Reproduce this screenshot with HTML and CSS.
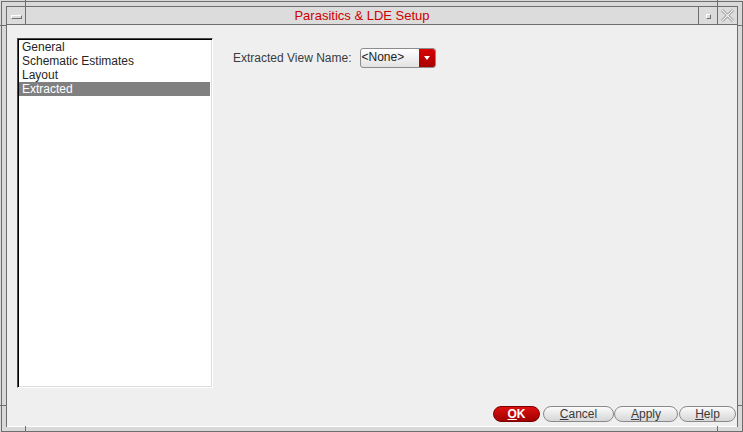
FILE: index.html
```html
<!DOCTYPE html>
<html lang="en">
<head>
  <meta charset="UTF-8" />
  <title>Parasitics &amp; LDE Setup</title>
  <link rel="stylesheet" href="styles.css">
</head>
<body>
  <div class="window">
    <span class="mark mark-v" style="left:25px;top:0"></span>
    <span class="mark mark-v" style="left:717px;top:0"></span>
    <span class="mark mark-v" style="left:25px;top:426px"></span>
    <span class="mark mark-v" style="left:717px;top:426px"></span>
    <span class="mark mark-h" style="left:0;top:25px"></span>
    <span class="mark mark-h" style="left:737px;top:25px"></span>
    <span class="mark mark-h" style="left:0;top:405px"></span>
    <span class="mark mark-h" style="left:737px;top:405px"></span>

    <div class="frame">
      <div class="inner">
        <div class="titlebar">
          <div class="tbtn tbtn-min"><span class="min-icon"></span></div>
          <div class="title">Parasitics &amp; LDE Setup</div>
          <div class="tbtn tbtn-max"><span class="max-icon"></span></div>
          <div class="tbtn tbtn-close">
            <svg width="13" height="13" viewBox="0 0 13 13">
              <path d="M1 1 L12 12 M12 1 L1 12" stroke="#8a8a8a" stroke-width="2.6" fill="none"/>
              <path d="M1 1 L12 12 M12 1 L1 12" stroke="#f4f4f4" stroke-width="1.2" fill="none"/>
            </svg>
          </div>
        </div>

        <div class="content">
          <div class="main">
            <ul class="list">
              <li>General</li>
              <li>Schematic Estimates</li>
              <li>Layout</li>
              <li class="selected">Extracted</li>
            </ul>

            <div class="panel">
              <div class="field">
                <label>Extracted View Name:</label>
                <div class="combo">
                  <span class="combo-text">&lt;None&gt;</span>
                  <span class="combo-arrow"></span>
                </div>
              </div>
            </div>
          </div>

          <div class="buttons">
            <button class="btn btn-ok"><u>O</u>K</button>
            <button class="btn btn-cancel"><u>C</u>ancel</button>
            <button class="btn btn-apply"><u>A</u>pply</button>
            <button class="btn btn-help"><u>H</u>elp</button>
          </div>
        </div>
      </div>
    </div>
  </div>
</body>
</html>
```

FILE: styles.css
```css
html, body {
  margin: 0;
  padding: 0;
  background: #d9d9d9;
  overflow: hidden;
}

body {
  font-family: "Liberation Sans", Arial, sans-serif;
  font-size: 12px;
}

.window {
  position: relative;
  width: 743px;
  height: 432px;
  box-sizing: border-box;
  padding: 1px 0 0 1px;
  background: #d9d9d9;
}

.mark {
  position: absolute;
  background: #6e6e6e;
}

.mark-v {
  width: 1px;
  height: 6px;
}

.mark-h {
  width: 6px;
  height: 1px;
}

.frame {
  height: 100%;
  box-sizing: border-box;
  border: 1px solid #6e6e6e;
  padding: 4px;
}

.inner {
  height: 100%;
  box-sizing: border-box;
  border-left: 1px solid #6e6e6e;
  border-right: 1px solid #6e6e6e;
  border-top: 1px solid #6e6e6e;
  display: flex;
  flex-direction: column;
}

/* title bar */
.titlebar {
  height: 17px;
  border-bottom: 1px solid #6e6e6e;
  background: #dcdcdc;
  display: flex;
}

.tbtn {
  display: flex;
  align-items: center;
  justify-content: center;
}

.tbtn-min {
  width: 18px;
  border-right: 1px solid #6e6e6e;
}

.min-icon {
  width: 9px;
  height: 2px;
  border-top: 1px solid #ffffff;
  border-left: 1px solid #ffffff;
  border-right: 1px solid #6e6e6e;
  border-bottom: 1px solid #6e6e6e;
  margin-top: 3px;
}

.title {
  flex: 1;
  text-align: center;
  color: #cc0000;
  font-size: 13px;
  line-height: 17px;
}

.tbtn-max {
  width: 18px;
  border-left: 1px solid #6e6e6e;
}

.max-icon {
  width: 3px;
  height: 3px;
  border-top: 1px solid #ffffff;
  border-left: 1px solid #ffffff;
  border-right: 1px solid #6e6e6e;
  border-bottom: 1px solid #6e6e6e;
  margin-top: 1px;
}

.tbtn-close {
  width: 19px;
  border-left: 1px solid #6e6e6e;
}

/* dialog body */
.content {
  flex: 1;
  background: #efefef;
  border-bottom: 1px solid #ffffff;
  display: flex;
  flex-direction: column;
}

.main {
  flex: 1;
  display: flex;
  padding: 13px 0 0 10px;
}

.list {
  width: 196px;
  height: 350px;
  box-sizing: border-box;
  margin: 0;
  padding: 1px 0 0 0;
  list-style: none;
  background: #ffffff;
  border-top: 1px solid #4a4a4a;
  border-left: 1px solid #4a4a4a;
  border-right: 1px solid #ffffff;
  border-bottom: 1px solid #ffffff;
  box-shadow: inset 1px 1px 0 #000000, inset -1px -1px 0 #dcdcdc;
}

.list li {
  height: 14px;
  line-height: 14px;
  margin: 0 2px 0 1px;
  padding-left: 3px;
  color: #262626;
}

.list li.selected {
  background: #808080;
  color: #ffffff;
}

.panel {
  margin-left: 20px;
  padding-top: 10px;
}

.field {
  display: flex;
  align-items: center;
  gap: 8px;
}

.field label {
  color: #3c3c3c;
}

.combo {
  width: 76px;
  height: 20px;
  box-sizing: border-box;
  border: 1px solid #8c8c8c;
  border-radius: 3px;
  background: linear-gradient(#ffffff, #e2e2e2);
  display: flex;
  overflow: hidden;
}

.combo-text {
  flex: 1;
  padding-left: 1px;
  line-height: 17px;
  color: #222222;
}

.combo-arrow {
  width: 16px;
  background: linear-gradient(#d80000, #a80000);
  position: relative;
}

.combo-arrow::after {
  content: "";
  position: absolute;
  left: 5px;
  top: 7px;
  border-left: 3px solid transparent;
  border-right: 3px solid transparent;
  border-top: 4px solid #ffffff;
}

/* bottom buttons */
.buttons {
  display: flex;
  justify-content: flex-end;
  padding: 0 1px 4px 0;
}

.btn {
  height: 16px;
  box-sizing: border-box;
  padding: 0;
  margin: 0;
  border: 1px solid #8a8a8a;
  border-radius: 8px;
  background: linear-gradient(#fbfbfb, #d6d6d6);
  font-family: "Liberation Sans", Arial, sans-serif;
  font-size: 12px;
  line-height: 14px;
  color: #3a3a3a;
}

.btn-ok {
  width: 47px;
  background: linear-gradient(#dd1010, #a00000);
  border-color: #7a0000;
  color: #ffffff;
  font-weight: bold;
}

.btn-cancel {
  width: 71px;
  margin-left: 3px;
}

.btn-apply {
  width: 64px;
}

.btn-help {
  width: 57px;
  margin-left: 1px;
}
```
